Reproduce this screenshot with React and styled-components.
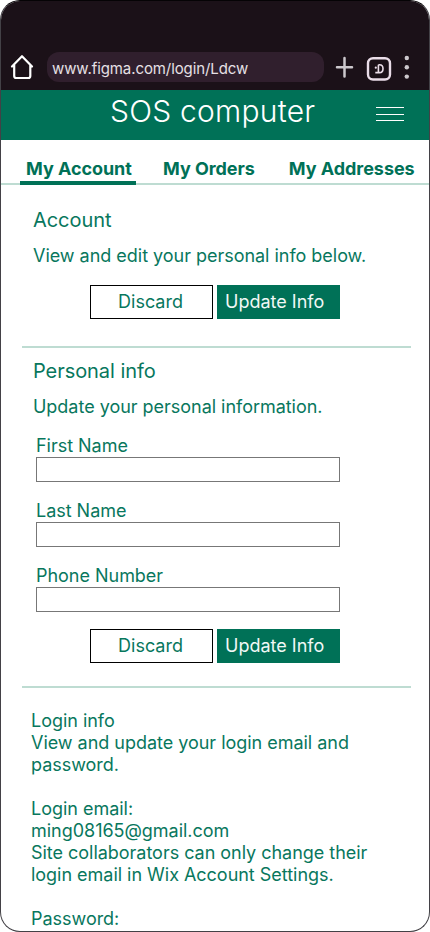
import React from "react";
import styled, { createGlobalStyle } from "styled-components";

const green = "#007157";
const rule = "#bedcd2";

const GlobalStyle = createGlobalStyle`
  * { box-sizing: border-box; }
  body { margin: 0; background: #fff; overflow: hidden; font-family: Inter, sans-serif; }
  h1, h2, p { margin: 0; font-weight: inherit; }
`;

const Phone = styled.div`
  width: 430px;
  height: 932px;
  border: 1px solid #434146;
  border-top-color: #050305;
  border-radius: 20px;
  overflow: hidden;
  background: #fff;
  color: #08775d;
  font-size: 18px;
  line-height: 22px;
  font-weight: 400;
  letter-spacing: -0.025px;
`;

const BrowserBar = styled.div`
  height: 89px;
  padding: 51px 0 0 8px;
  display: flex;
  align-items: flex-start;
  background: #1b1118;
`;

const AddressBar = styled.div`
  width: 277px;
  height: 30px;
  margin-left: 4px;
  padding: 1px 0 0 5px;
  border-radius: 12px;
  background: #301f2d;
  color: #e6e0e5;
  font-size: 15px;
  letter-spacing: -0.09px;
  line-height: 31px;
`;

const BarIcon = styled.svg`
  display: block;
  flex: none;
`;

const TitleBar = styled.header`
  height: 50px;
  padding-left: 109px;
  padding-right: 25px;
  display: flex;
  justify-content: space-between;
  background: ${green};
`;

const Title = styled.h1`
  color: #fff;
  font-size: 30px;
  font-weight: 300;
  line-height: 42px;
  letter-spacing: 0.24px;
`;

const MenuButton = styled.div`
  width: 28px;
  height: 14px;
  margin-top: 17px;
  display: flex;
  flex-direction: column;
  justify-content: space-between;
`;

const MenuLine = styled.span`
  height: 1px;
  background: #fff;
`;

const Tabs = styled.nav`
  height: 45px;
  padding: 18px 0 0 19px;
  display: flex;
  gap: 21px;
  border-bottom: 2px solid ${rule};
`;

const Tab = styled.span`
  height: 27px;
  padding: 0 4px 0 6px;
  min-width: ${(p) => (p.$active ? 116 : 0)}px;
  margin-left: ${(p) => (p.$last ? 3 : 0)}px;
  flex: none;
  white-space: nowrap;
  color: ${green};
  font-weight: 700;
  letter-spacing: -0.05px;
  border-bottom: 4px solid ${(p) => (p.$active ? green : "transparent")};
`;

const Section = styled.section`
  height: ${(p) => p.$height}px;
  margin: 0 18px 0 21px;
  padding: ${(p) => p.$top}px 0 0 11px;
  border-bottom: 2px solid ${rule};
`;

const Heading = styled.h2`
  font-size: 20px;
  line-height: 24px;
  margin-bottom: 13px;
  letter-spacing: -0.06px;
`;

const Field = styled.label`
  display: block;
  width: 304px;
  height: 65px;
  margin-left: 3px;
`;

const Input = styled.input`
  display: block;
  width: 304px;
  height: 25px;
  margin: 0;
  border: 1px solid #777;
  border-radius: 0;
  background: #fff;
`;

const Actions = styled.div`
  display: flex;
  gap: 4px;
  margin: ${(p) => p.$top}px 0 0 57px;
`;

const Button = styled.button`
  width: 123px;
  height: 34px;
  padding: 0 ${(p) => (p.$primary ? 8 : 2)}px 0 ${(p) => (p.$primary ? 8 : 0)}px;
  border: ${(p) => (p.$primary ? "0" : "1px solid #000")};
  background: ${(p) => (p.$primary ? green : "#fff")};
  color: ${(p) => (p.$primary ? "#f1f8f6" : "#08775d")};
  text-align: ${(p) => (p.$primary ? "left" : "center")};
  font: 400 18px/22px Inter, sans-serif;
`;

const LoginInfo = styled.section`
  margin: 22px 0 0 30px;
  width: 350px;
`;

const Paragraph = styled.p`
  margin-bottom: ${(p) => p.$gap ?? 22}px;
`;

const ButtonPair = ({ top }) => (
  <Actions $top={top}>
    <Button>Discard</Button>
    <Button $primary>Update Info</Button>
  </Actions>
);

export default function App() {
  return (
    <>
      <GlobalStyle />
      <Phone>
        <BrowserBar>
          <BarIcon width="34" height="30" viewBox="9 52 34 30" fill="none" stroke="#fff" strokeWidth="2.2" strokeLinecap="round" strokeLinejoin="round">
            <path d="M12 66.5L22 56.2L32 66.5M14.2 65V76Q14.2 78 16.2 78H28.3Q30.3 78 30.3 76V65" />
          </BarIcon>
          <AddressBar>www.figma.com/login/Ldcw</AddressBar>
          <BarIcon width="96" height="30" viewBox="324 52 96 30" fill="none">
            <path d="M344.5 58V76.5M337 67.2H352" stroke="#ccc8cc" strokeWidth="2.5" strokeLinecap="round" />
            <rect x="368" y="58.2" width="22" height="21.3" rx="5" stroke="#eadde8" strokeWidth="2.4" />
            <path d="M378.4 64.8H379.5Q383 64.8 383 68.7T379.5 72.6H375.3M378.4 64.8V72.6" stroke="#eadde8" strokeWidth="1.6" />
            <circle cx="375.8" cy="67.7" r="1.1" fill="#eadde8" />
            <circle cx="406.8" cy="58" r="2.2" fill="#ccc8cc" />
            <circle cx="406.8" cy="67.3" r="2.2" fill="#ccc8cc" />
            <circle cx="406.8" cy="76.6" r="2.2" fill="#ccc8cc" />
          </BarIcon>
        </BrowserBar>
        <TitleBar>
          <Title>SOS computer</Title>
          <MenuButton>
            <MenuLine />
            <MenuLine />
            <MenuLine />
          </MenuButton>
        </TitleBar>
        <Tabs>
          <Tab $active>My Account</Tab>
          <Tab>My Orders</Tab>
          <Tab $last>My Addresses</Tab>
        </Tabs>
        <Section $height={163} $top={23}>
          <Heading>Account</Heading>
          <p>View and edit your personal info below.</p>
          <ButtonPair top={18} />
        </Section>
        <Section $height={340} $top={11}>
          <Heading>Personal info</Heading>
          <Paragraph $gap={17}>Update your personal information.</Paragraph>
          <Field>First Name<Input /></Field>
          <Field>Last Name<Input /></Field>
          <Field>Phone Number<Input /></Field>
          <ButtonPair top={-1} />
        </Section>
        <LoginInfo>
          <Paragraph>
            Login info
            <br />
            View and update your login email and password.
          </Paragraph>
          <Paragraph>
            Login email:
            <br />
            ming08165@gmail.com
            <br />
            Site collaborators can only change their login email in Wix Account Settings.
          </Paragraph>
          <p>Password:</p>
        </LoginInfo>
      </Phone>
    </>
  );
}
